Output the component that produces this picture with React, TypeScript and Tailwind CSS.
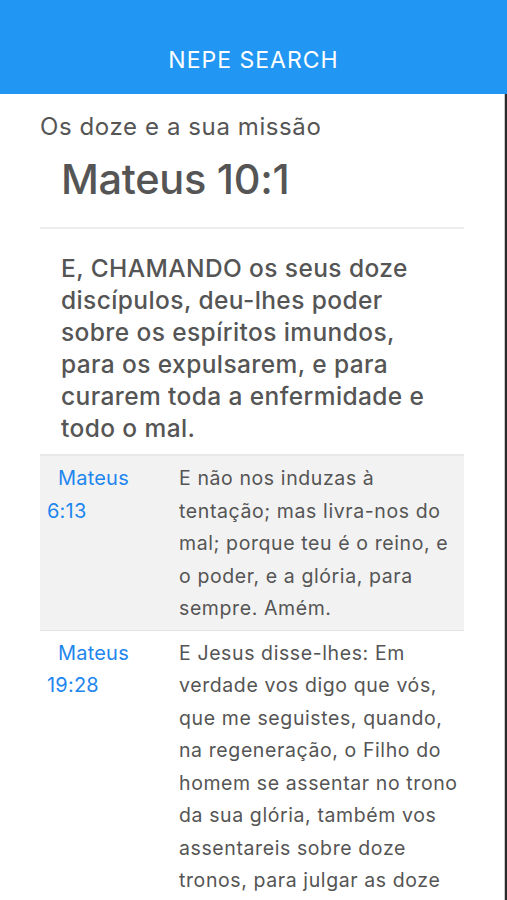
import React from "react";

const font = { fontFamily: "Inter, 'Noto Sans', sans-serif" };

const rows = [
  {
    ref: ["Mateus", "6:13"],
    lines: [
      "E não nos induzas à",
      "tentação; mas livra-nos do",
      "mal; porque teu é o reino, e",
      "o poder, e a glória, para",
      "sempre. Amém.",
    ],
    bg: "bg-[#f2f2f2]",
  },
  {
    ref: ["Mateus", "19:28"],
    lines: [
      "E Jesus disse-lhes: Em",
      "verdade vos digo que vós,",
      "que me seguistes, quando,",
      "na regeneração, o Filho do",
      "homem se assentar no trono",
      "da sua glória, também vos",
      "assentareis sobre doze",
      "tronos, para julgar as doze",
      "tribos de Israel.",
    ],
    bg: "bg-white",
  },
];

export default function App() {
  return (
    <div className="w-[507px] h-[900px] overflow-hidden bg-white text-[#555]" style={font}>
      <div className="h-[94px] bg-[#2196f3] flex items-center justify-center pt-[26px]">
        <span className="text-white text-[23px] leading-none tracking-[1px]">NEPE SEARCH</span>
      </div>
      <div className="flex h-[806px]">
        <div className="flex-1 border-r border-[#c8c8c8]">
          <div className="mx-[40px] pt-[18px]">
            <div className="text-[24px] leading-[29px] tracking-[0.6px]">Os doze e a sua missão</div>
            <div className="pl-[21px] text-[41.5px] leading-[54px] mt-[11px] font-medium tracking-[-0.3px]">Mateus 10:1</div>
            <div className="h-[2px] bg-[#ececec] mt-[21px]" />
            <div className="pl-[21px] pt-[23px] pb-[10px] text-[24.5px] leading-[32px] font-medium tracking-[0.4px] whitespace-nowrap">
              E, CHAMANDO os seus doze
              <br />
              discípulos, deu-lhes poder
              <br />
              sobre os espíritos imundos,
              <br />
              para os expulsarem, e para
              <br />
              curarem toda a enfermidade e
              <br />
              todo o mal.
            </div>
            <div className="border-t-2 border-[#e8e8e8]">
              {rows.map((r, i) => (
                <div key={i} className={`flex ${r.bg} border-b border-[#e2e2e2] pt-[6px] pb-[5px]`}>
                  <div className="w-[139px] pl-[7px] text-[20px] leading-[32.5px] tracking-[0.2px] text-[#1e86ee]">
                    <span className="pl-[11px]">{r.ref[0]}</span>
                    <br />
                    <span>{r.ref[1]}</span>
                  </div>
                  <div className="flex-1 text-[19.5px] leading-[32.5px] tracking-[0.6px] whitespace-nowrap">
                    {r.lines.map((l, j) => (
                      <div key={j}>{l}</div>
                    ))}
                  </div>
                </div>
              ))}
            </div>
          </div>
        </div>
        <div className="w-[2px] bg-[#2a2a2a]" />
      </div>
    </div>
  );
}
